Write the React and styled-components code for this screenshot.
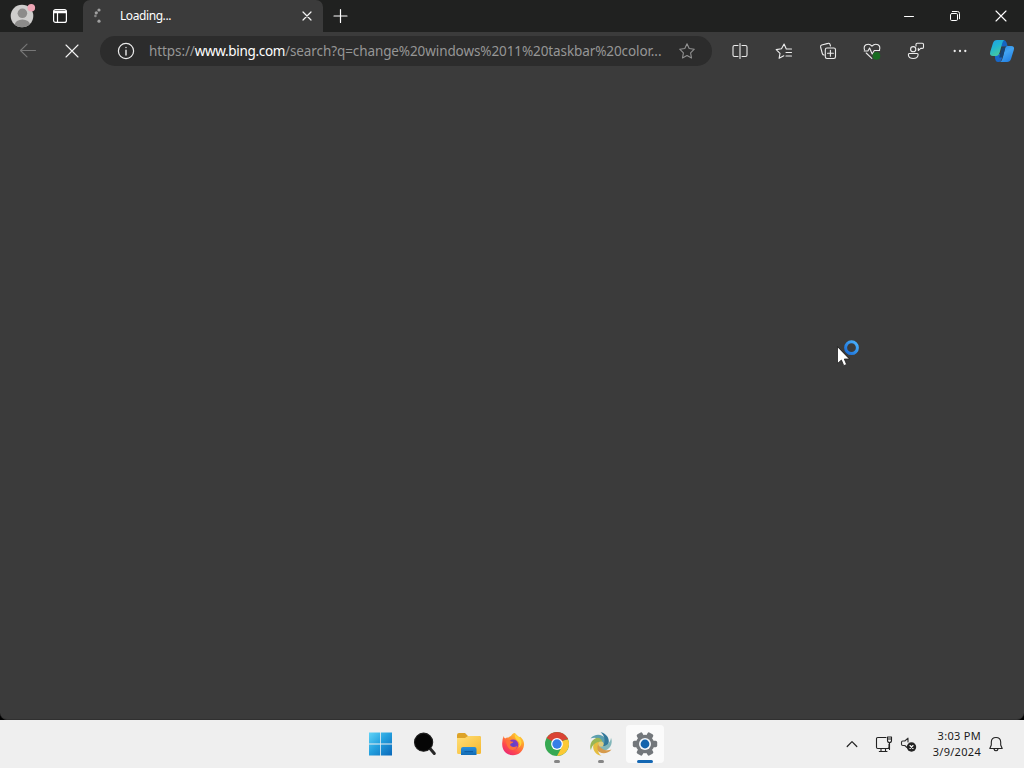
import React from "react";
import styled, { createGlobalStyle } from "styled-components";

const GlobalStyle = createGlobalStyle`
  * { box-sizing: border-box; }
  body { margin: 0; overflow: hidden; background: #3b3b3b; font-family: "Noto Sans", "Open Sans", sans-serif; }
  svg { display: block; flex: none; }
`;

const Desktop = styled.div`
  position: relative;
  width: 1024px;
  height: 768px;
  display: flex;
  flex-direction: column;
  background: #000;
`;

const Browser = styled.main`
  height: 720px;
  display: flex;
  flex-direction: column;
  background: #3b3b3b;
  border-radius: 0 0 7px 7px;
  border-bottom: 1px solid #303030;
`;

const TitleBar = styled.header`
  height: 32px;
  display: flex;
  background: #202120;
`;

const Cell = styled.div`
  width: ${(p) => p.$w}px;
  height: ${(p) => p.$h || 32}px;
  flex: none;
  display: flex;
  align-items: center;
  justify-content: center;
`;

const ProfileArea = styled.div`
  width: 83px;
  padding-left: 3px;
  display: flex;
`;

const Tab = styled.div`
  width: 240px;
  height: 32px;
  padding: 0 8px 0 4px;
  display: flex;
  align-items: center;
  background: #3b3b3b;
  border-radius: 7px 7px 0 0;
`;

const TabTitle = styled.span`
  flex: 1;
  padding-left: 13px;
  color: #fff;
  font-size: 12px;
  line-height: 16px;
  letter-spacing: -0.42px;
`;

const WindowControls = styled.div`
  display: flex;
  margin-left: auto;
`;

const Toolbar = styled.nav`
  height: 38px;
  padding-left: 6px;
  display: flex;
  align-items: center;
`;

const AddressBar = styled.div`
  width: 612px;
  height: 30px;
  margin: 0 5.5px 0 6px;
  padding: 0 3px 0 4px;
  display: flex;
  align-items: center;
  background: #2c2c2c;
  border-radius: 15px;
`;

const Url = styled.span`
  width: 517px;
  padding-left: 1px;
  white-space: nowrap;
  color: #969696;
  font-size: 13.5px;
  line-height: 20px;
  letter-spacing: -0.095px;
  b { font-weight: 400; color: #fff; letter-spacing: -0.33px; }
`;

const Taskbar = styled.footer`
  height: 48px;
  display: flex;
  background: #efefef;
  color: #1b1b1b;
`;

const AppList = styled.div`
  display: flex;
  padding-left: 359px;
`;

const AppButton = styled.div`
  position: relative;
  width: 38px;
  height: 38px;
  margin: 5px 3px 0;
  padding-bottom: 1px;
  display: flex;
  align-items: center;
  justify-content: center;
  border-radius: 4px;
  background: ${(p) => (p.$active ? "#fbfbfb" : "transparent")};
  &::after {
    content: "";
    position: absolute;
    bottom: 0px;
    width: ${(p) => (p.$active ? 16 : p.$running ? 6 : 0)}px;
    height: 3px;
    border-radius: 2px;
    background: ${(p) => (p.$active ? "#1467b3" : "#858585")};
  }
`;

const Tray = styled.div`
  margin-left: auto;
  padding-right: 14px;
  display: flex;
  align-items: center;
`;

const Clock = styled.div`
  width: 64px;
  padding-right: 1px;
  display: flex;
  flex-direction: column;
  align-items: flex-end;
  font-size: 11px;
  line-height: 16px;
  letter-spacing: 0.3px;
  white-space: nowrap;
`;

const Pointer = styled.div`
  position: absolute;
  left: 836px;
  top: 338px;
`;

const Icon = ({ w = 20, h = w, color = "#ececec", sw = 1.1, children }) => (
  <svg width={w} height={h} viewBox={`0 0 ${w} ${h}`} fill="none" stroke={color} strokeWidth={sw} strokeLinecap="round" strokeLinejoin="round">
    {children}
  </svg>
);

const Avatar = () => (
  <Icon w={28}>
    <g stroke="none">
      <clipPath id="face"><circle cx="13" cy="14" r="11.3" /></clipPath>
      <circle cx="13" cy="14" r="11.3" fill="#cecdcc" />
      <g clipPath="url(#face)" fill="#8c8b8a"><circle cx="13.4" cy="11.3" r="4.8" /><ellipse cx="13.4" cy="22.6" rx="7.6" ry="5.2" /></g>
      <circle cx="22.3" cy="5.7" r="3.8" fill="#efa6b6" />
    </g>
  </Icon>
);

const TabActions = () => (
  <Icon w={16} color="#fff" sw={1.2}>
    <rect x="1.6" y="1.6" width="12.8" height="12.8" rx="2" />
    <path d="M2 3.3H14M2 4.6H14M5.5 5V14" />
  </Icon>
);

const Spinner = () => (
  <Icon w={18}>
    <g stroke="none" fill="#a0a0a0">
      <circle cx="11" cy="3" r="1.6" /><circle cx="8.3" cy="5.8" r="1.6" /><circle cx="7.4" cy="8.9" r="1.3" fill="#858585" /><circle cx="11" cy="14.2" r="1.6" />
    </g>
  </Icon>
);

const Cross = ({ size, sw, color = "#f4f4f4" }) => (
  <Icon w={size} color={color} sw={sw}><path d={`M1 1L${size - 1} ${size - 1}M${size - 1} 1L1 ${size - 1}`} /></Icon>
);

const Copilot = () => (
  <Icon w={26}>
    <defs>
      <linearGradient id="cpA" x1="0" y1="0" x2=".5" y2="1"><stop stopColor="#209de6" /><stop offset=".5" stopColor="#22b5d0" /><stop offset="1" stopColor="#48c99b" /></linearGradient>
      <linearGradient id="cpB" x1="0" y1="0" x2=".6" y2="1"><stop stopColor="#2588df" /><stop offset=".5" stopColor="#42a3f2" /><stop offset="1" stopColor="#2483e4" /></linearGradient>
    </defs>
    <g stroke="none">
      <path d="M5.5 16H14L13 20Q12 24 9.5 24H9Q6.7 24 6.2 21Z" fill="#1767c8" />
      <path d="M10.5 2H14.5Q17 2 18 6L18.7 8.5H12Z" fill="#1565c2" />
      <path d="M8 2H15Q13.7 3 13 6L10.8 14Q9.8 18 6.8 18H4Q.2 18 1.2 14L4 5Q5 2 8 2Z" fill="url(#cpA)" />
      <path d="M18.6 8H22Q26 8 24.8 12L22 21Q21 24 18 24H10Q12.5 24 13.5 20.5L15.7 11.5Q16.5 8 18.6 8Z" fill="url(#cpB)" />
      <path d="M12.9 9.5H16.4L13.8 19.5H10.2Z" fill="#174371" />
    </g>
  </Icon>
);

const WindowsLogo = () => (
  <Icon w={24}>
    <defs><linearGradient id="win" x1="0" y1="0" x2="24" y2="24" gradientUnits="userSpaceOnUse"><stop stopColor="#62d5f8" /><stop offset=".45" stopColor="#25a1df" /><stop offset="1" stopColor="#0864b7" /></linearGradient></defs>
    <path stroke="none" fill="url(#win)" d="M0 .5H11.2V11.4H0ZM12 .5H23V11.4H12ZM0 12.5H11.2V23.5H0ZM12 12.5H23V23.5H12Z" />
  </Icon>
);

const SearchIcon = () => (
  <Icon w={24}>
    <path d="M17 16.5L21.3 21.5" stroke="#272727" strokeWidth="3" />
    <circle cx="10.6" cy="10.2" r="9.1" fill="#050505" stroke="#202020" />
  </Icon>
);

const Folder = () => (
  <Icon w={26}>
    <defs>
      <linearGradient id="fo" x1="0" y1="0" x2="1" y2="1"><stop stopColor="#ffdf78" /><stop offset="1" stopColor="#f5b72e" /></linearGradient>
      <linearGradient id="fb" x1="0" y1="0" x2="0" y2="1"><stop stopColor="#2990dd" /><stop offset="1" stopColor="#126bb3" /></linearGradient>
    </defs>
    <g stroke="none">
      <path d="M1 4Q1 2 3 2H9L12 5H23Q25 5 25 7V13H1Z" fill="#dda329" />
      <path d="M1 7H9L12 5H23Q25 5 25 7V21.5Q25 23 23.5 23H2.5Q1 23 1 21.5Z" fill="url(#fo)" />
      <path d="M5 24V18Q5 16 7 16H18.5Q20.5 16 20.5 18V24Z" fill="url(#fb)" />
      <path d="M8.5 20.2H17V21.2H8.5Z" fill="#0c579b" />
    </g>
  </Icon>
);

const Firefox = () => (
  <Icon w={24}>
    <defs>
      <linearGradient id="ffa" x1=".9" y1="0" x2=".2" y2="1"><stop stopColor="#ffe23c" /><stop offset=".35" stopColor="#ff9b2d" /><stop offset=".7" stopColor="#ff4a4b" /><stop offset="1" stopColor="#e6257b" /></linearGradient>
      <radialGradient id="ffb"><stop stopColor="#5a45c8" /><stop offset="1" stopColor="#8c38bf" /></radialGradient>
    </defs>
    <g stroke="none">
      <path d="M2.8 4Q3 6 4.2 6.6Q5 5.5 7 5.5Q10 5 11.5 2Q14 .2 14.8 2.1L17.5 4.6Q18.4 5.4 19 4.4Q23.5 8 23 13C22.4 19.5 17.5 23.3 12 23.3C6 23.3 1.2 18.5 1.2 12.4Q1 7 2.8 4Z" fill="url(#ffa)" />
      <circle cx="12.2" cy="12.6" r="5.1" fill="url(#ffb)" />
      <path d="M5 9Q8 7.5 10 9.4L12.4 9.8Q12.2 11.2 10 11.4Q8.5 12.2 9.7 14Q12.5 16 16.2 13.9Q15.5 18.4 11 18Q6 17.3 5 9Z" fill="#ff7139" />
      <path d="M14 2Q13 6 17 9Q20 12 17.4 16Q22.3 12.5 19.5 7Q17.7 4.7 16 4Z" fill="#ffd43b" />
    </g>
  </Icon>
);

const Chrome = () => (
  <Icon w={26}>
    <g stroke="none">
      <circle cx="13" cy="13" r="12" fill="#36a852" />
      <path d="M13 13L2.6 7A12 12 0 0 1 23.4 7L24 8H13Z" fill="#d94435" />
      <path d="M18 10L24 8.2A12 12 0 0 1 13 25L17.8 16Z" fill="#fcc934" />
      <path d="M13 7H23.4L24 8.3Q20 8.5 18 10Z" fill="#d94435" />
      <circle cx="13" cy="13" r="5.9" fill="#fff" /><circle cx="13" cy="13" r="4.7" fill="#367fe8" />
    </g>
  </Icon>
);

const swirlBlades = [
  { angle: 0, color: "#5c9fae" },
  { angle: 60, color: "#33789a" },
  { angle: 120, color: "#82b6b9" },
  { angle: 180, color: "#d69a4b" },
  { angle: 240, color: "#e5bd3f" },
  { angle: 300, color: "#9ab655" },
];

const Swirl = () => (
  <Icon w={26}>
    <g stroke="none">
      <circle cx="13" cy="13" r="7" fill="#c7c57b" />
      {swirlBlades.map(({ angle, color }) => (
        <path key={angle} d="M2.5 7.5C6.5 2.2 14.5 2.8 17 7.2C18.2 9.4 17.2 12 15 13.2C15.2 8.6 8 5 2.5 7.5Z" fill={color} transform={`rotate(${angle} 13 13)`} />
      ))}
      <circle cx="13" cy="13" r="2.6" fill="#dccb80" />
    </g>
  </Icon>
);

const Gear = () => (
  <Icon w={26}>
    <g stroke="none" fill="#73777b">
      {[0, 60, 120].map((a) => <rect key={a} x="9.8" y=".8" width="6.4" height="24.4" rx="1.6" transform={`rotate(${a + 30} 13 13)`} />)}
      <circle cx="13" cy="13" r="9.2" />
      <circle cx="13" cy="13" r="6" fill="#f4f8fc" /><circle cx="13" cy="13" r="4.4" fill="#1263ad" />
    </g>
  </Icon>
);

const toolbarIcons = [
  <Icon key="split" w={20}><path d="M8 4.5H4.5Q3 4.5 3 6V14Q3 15.5 4.5 15.5H8M12 4.5H15.5Q17 4.5 17 6V14Q17 15.5 15.5 15.5H12M10 2.5V17.5" /></Icon>,
  <Icon key="favorites" w={20}><path d="M17.5 8H12.3L10.1 3L7.5 7.8L2.2 8.6L6 12.3L5.1 17.3L9.8 14.8M12 11.5H17.5M12 15H17.5" /></Icon>,
  <Icon key="collections" w={20}><path d="M6 14Q4.7 14 4.3 12.5L2.6 6Q2.2 4.5 3.7 4L10 2.4Q11.4 2 12 3.3L12.5 5M9 7H15.8Q17.5 7 17.5 8.7V15.8Q17.5 17.5 15.8 17.5H9Q7.3 17.5 7.3 15.8V8.7Q7.3 7 9 7ZM12.4 9.3V15.2M9.5 12.2H15.4" /></Icon>,
  <Icon key="health" w={20}><path d="M2.5 8.8Q1.4 5.3 4 3.7Q7.5 2.2 10 5.2Q12.5 2.2 16 3.7Q18.6 5.3 17.5 8.8M2.2 10H5.9L7.6 7L10.2 13L12.3 9.5H17.6M4.2 12L9.8 17.3" /><circle cx="14.5" cy="14.9" r="3.8" fill="#176b20" stroke="none" /></Icon>,
  <Icon key="feedback" w={20}><circle cx="7.2" cy="8.2" r="2.6" /><path d="M3.5 12.5H11Q12.2 12.5 12.1 14Q11.6 17.5 7.3 17.5Q2.7 17.5 2.4 14Q2.3 12.5 3.5 12.5ZM10 5V3.3Q10 2.2 11.2 2.2H16.3Q17.5 2.2 17.5 3.3V6.2Q17.5 7.4 16.3 7.4H14.7L12.3 9.5V7.4" /></Icon>,
  <Icon key="more" w={20}><g fill="#ececec" stroke="none"><circle cx="4.7" cy="10" r="1.15" /><circle cx="10" cy="10" r="1.15" /><circle cx="15.3" cy="10" r="1.15" /></g></Icon>,
];

const apps = [
  { icon: <WindowsLogo /> }, { icon: <SearchIcon /> }, { icon: <Folder /> }, { icon: <Firefox /> },
  { icon: <Chrome />, running: true }, { icon: <Swirl />, running: true }, { icon: <Gear />, active: true },
];

export default function App() {
  return (
    <Desktop>
      <GlobalStyle />
      <Browser>
        <TitleBar>
          <ProfileArea>
            <Cell $w={40}><Avatar /></Cell>
            <Cell $w={34}><TabActions /></Cell>
          </ProfileArea>
          <Tab>
            <Cell $w={20}><Spinner /></Cell>
            <TabTitle>Loading...</TabTitle>
            <Cell $w={16}><Cross size={10} sw={1.2} /></Cell>
          </Tab>
          <Cell $w={35}><Icon w={16} color="#fff" sw={1.2}><path d="M7.5 1.5V14.5M1 8H14" /></Icon></Cell>
          <WindowControls>
            <Cell $w={46}><Icon w={12} color="#fff" sw={1}><path d="M1.5 6.5H10.5" /></Icon></Cell>
            <Cell $w={46}><Icon w={12} color="#fff" sw={1}><path d="M3 3.5H7.3Q8.5 3.5 8.5 4.7V9.3Q8.5 10.5 7.3 10.5H2.7Q1.5 10.5 1.5 9.3V4.7Q1.5 3.5 3 3.5ZM3.3 1.5H8.5Q10.5 1.5 10.5 3.5V8.8" /></Icon></Cell>
            <Cell $w={46}><Cross size={12} sw={1.1} color="#fff" /></Cell>
          </WindowControls>
        </TitleBar>
        <Toolbar>
          <Cell $w={44}><Icon w={20} color="#777"><path d="M17.5 9.5H2.5M9 3.2L2.5 9.5L9 15.8" /></Icon></Cell>
          <Cell $w={44}><Cross size={14} sw={1.1} /></Cell>
          <AddressBar>
            <Cell $w={44}><Icon w={20} sw={1.2}><circle cx="10" cy="10" r="7.6" /><path d="M10 9.3V14M10 6.4V6.6" strokeWidth="1.4" /></Icon></Cell>
            <Url>https://<b>www.bing.com</b>/search?q=change%20windows%2011%20taskbar%20color...</Url>
            <Cell $w={44}><Icon w={20} color="#919191"><path d="M10 2.8L12.2 7.5L17.3 8.2L13.6 11.8L14.5 17L10 14.6L5.5 17L6.4 11.8L2.7 8.2L7.8 7.5Z" /></Icon></Cell>
          </AddressBar>
          {toolbarIcons.map((icon) => <Cell key={icon.key} $w={44} $h={34}>{icon}</Cell>)}
          <Cell $w={40} $h={34}><Copilot /></Cell>
        </Toolbar>
      </Browser>
      <Taskbar>
        <AppList>
          {apps.map((app, i) => <AppButton key={i} $running={app.running} $active={app.active}>{app.icon}</AppButton>)}
        </AppList>
        <Tray>
          <Cell $w={32}><Icon w={12} color="#222" sw={1.2}><path d="M1.2 8.5L6 3.7L10.8 8.5" /></Icon></Cell>
          <Cell $w={32}><Icon w={18} color="#222" sw={1.1}><path d="M11 2.5H2.7Q1.5 2.5 1.5 3.7V12.3Q1.5 13.5 2.7 13.5H12.5Q14 13.5 14 12V9M6 13.5V16.5M10.5 13.5V16.5M4.3 16.5H12M14.5 8V14.5M12.5 2H16.5V5.5Q16.5 7.5 14.5 7.5Q12.5 7.5 12.5 5.5ZM12.5 4H16.5" /></Icon></Cell>
          <Cell $w={18}><Icon w={18} color="#303030" sw={1.1}><path d="M8 3.2L4.8 6H2.8Q1.5 6 1.5 7.2V9.3Q1.5 10.5 2.8 10.5H4.8L7 12.5M8 3.2V7" /><circle cx="11.5" cy="12" r="4.7" fill="#252525" stroke="none" /><path d="M10 10.5L13 13.5M13 10.5L10 13.5" stroke="#fff" /></Icon></Cell>
          <Clock><span>3:03 PM</span><span>3/9/2024</span></Clock>
          <Cell $w={28}><Icon w={16} color="#222" sw={1.1}><path d="M8 1.5Q3.5 1.5 3.3 6V9L1.8 12.5H14.2L12.7 9V6Q12.5 1.5 8 1.5ZM6 13Q6.5 14.8 8 14.8Q9.5 14.8 10 13" /></Icon></Cell>
        </Tray>
      </Taskbar>
      <Pointer>
        <Icon w={26} h={30}>
          <defs><linearGradient id="busy" x1="0" y1="1" x2="1" y2="0"><stop stopColor="#1769d3" /><stop offset="1" stopColor="#4bb4ff" /></linearGradient></defs>
          <circle cx="15.5" cy="9.7" r="5.9" stroke="url(#busy)" strokeWidth="3" />
          <path d="M1.5 9V25.5L5.4 22L7.8 27.7L10.6 26.4L8.3 21H13.2Z" fill="#fff" stroke="#202020" strokeWidth=".8" />
        </Icon>
      </Pointer>
    </Desktop>
  );
}
